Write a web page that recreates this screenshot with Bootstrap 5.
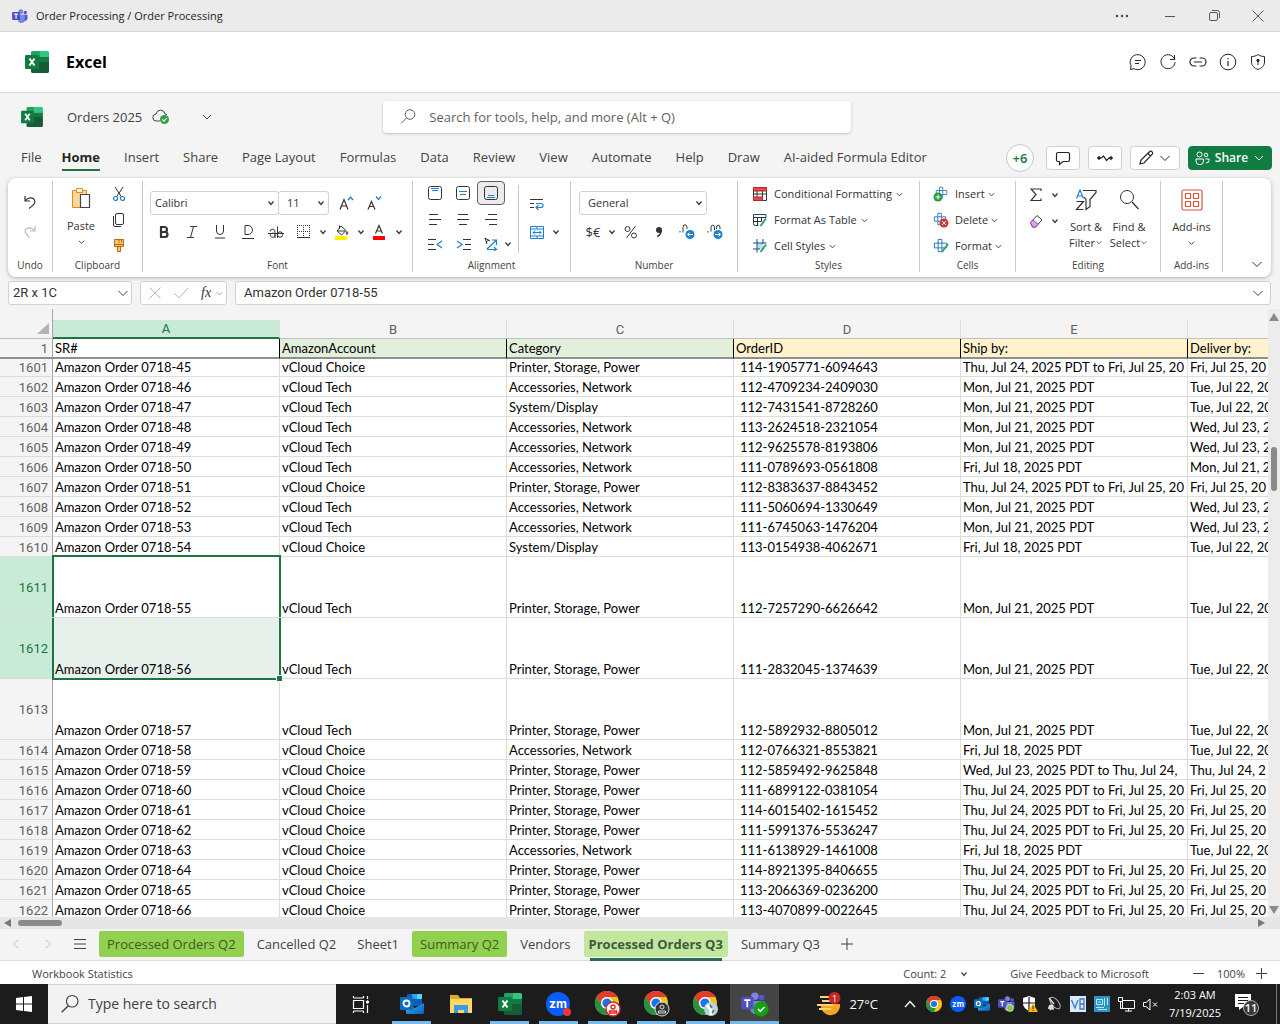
<!DOCTYPE html>
<html lang="en">
<head>
<meta charset="utf-8">
<meta name="viewport" content="width=device-width, initial-scale=1">
<title>Orders 2025 - Excel</title>
<link href="https://cdn.jsdelivr.net/npm/bootstrap@5.3.0/dist/css/bootstrap.min.css" rel="stylesheet">
<style>
body{font-family:"Open Sans","Noto Sans",sans-serif;font-size:13px;line-height:18px;color:#424242;background:#f4f4f4;overflow:hidden}
svg{display:block;flex:none;fill:none;stroke:currentColor;stroke-width:1}
a{color:inherit;text-decoration:none}
button{color:inherit}
.plain{background:none;border:0;padding:0;display:inline-flex;align-items:center;justify-content:center;font:inherit;color:inherit;flex:none}
.titlebar{height:32px;background:#ebebeb;border-bottom:1px solid #d6d6d6;font-size:11px;padding-left:12px;color:#242424}
.titlebar .plain{width:44px;height:31px;color:#555}
.apphead{height:61px;background:#fff;border-bottom:1px solid #d9d9d9;padding:0 13px 0 24px}
.apphead h1{font-size:16px;font-weight:700;line-height:20px;margin:0 0 0 16px;color:#000}
.apphead .plain{width:18px;height:24px;color:#242424}
.docrow{height:48px;padding-left:21px}
.tellme{width:468px;height:32px;margin-left:169px;background:#fff;border-radius:4px;box-shadow:0 1px 3px #0003;padding:0 16px;color:#616161}
.tellme input{border:0;background:none;outline:0;font-size:13px;width:100%;color:#616161;padding:0}
.tellme input::placeholder,.winsearch input::placeholder{color:inherit;opacity:1}
.tabrow{height:37px;padding:0 8px 0 21px}
.tabrow nav{gap:24px;height:33px}
.tabrow nav a{white-space:nowrap;padding-bottom:2px;border-bottom:2px solid transparent;line-height:20px;padding-top:2px}
.tabrow nav a:first-child{margin-right:-4px}
.tabrow nav a.now{font-weight:700;color:#242424;border-color:#217346}
.more6{width:28px;height:28px;border:1px solid #c8c8c8;border-radius:50%;background:#fff;color:#1b7444;font-weight:600;margin-right:4px}
.tbtn{height:24px;background:#fff;border:1px solid #d1d1d1;border-radius:4px;color:#242424;width:34px}
.tbtn.wide{width:50px;gap:4px}
.tbtn.share{width:84px;background:#107c41;border-color:#107c41;color:#fff;font-size:12px;font-weight:600;gap:5px}
.ribbon{height:99px;margin:0 9px 4px 8px;background:#fff;border-radius:8px;box-shadow:0 1px 4px #0004;color:#333}
.grp{border-right:1px solid #c8c8c8;margin:3px 0 5px;flex:none}
.grp .body{height:77px}
.grp .lbl{font-size:10px;line-height:14px;text-align:center;color:#424242}
.g-undo{width:45px}.g-clip{width:90px}.g-font{width:270px}.g-align{width:158px}.g-num{width:167px}.g-sty{width:182px}.g-cell{width:96px}.g-edit{width:145px}.g-add{width:62px}
.ib{width:28px;height:24px}
.cv{width:10px;height:24px}
.ib.on{background:#ebebeb;border:1px solid #616161;border-radius:4px}
.ln{height:26px}
.ln .plain{font-size:11px;gap:7px}
.ln .plain svg+svg,.ln .plain svg:last-child:not(:first-child){margin-left:-4px}
.duo{font-size:11px;line-height:16px}
.combo{height:24px;border:1px solid #d1d1d1;border-radius:3px;font-size:11px;padding:0 0 0 4px;color:#333;appearance:none;background:#fff url("data:image/svg+xml,%3Csvg xmlns='http://www.w3.org/2000/svg' viewBox='0 0 8 8'%3E%3Cpath d='M1.5 2.5 4 5.5 6.500 2.500' fill='none' stroke='%23333' stroke-width='1.200'/%3E%3C/svg%3E") no-repeat right 3px center/8px 8px}
.vr1{width:1px;background:#c8c8c8;height:68px}
.fbar{height:24px;margin:0 9px 4px 8px;gap:8px}
.fbox{background:#fff;border:1px solid #d1d1d1;border-radius:3px;height:24px;padding:0 4px}
.fbox input{border:0;outline:0;background:none;font-family:Roboto,sans-serif;font-size:13px;color:#333;min-width:0;padding:0;flex:1}
.sheet{font-family:Lato,sans-serif;font-size:13px;color:#000;min-height:0}
.gridwrap{overflow:hidden;min-width:0}
.xl{table-layout:fixed;width:1414px;border-collapse:separate;border-spacing:0}
.xl th,.xl td{padding:0;border:0 solid #dcdcdc;vertical-align:bottom;font-weight:400}
.xl td{background:#fff;border-width:0 1px 1px 0;position:relative}
.xl td div{overflow:hidden;white-space:nowrap;line-height:18px;padding:1px 0 0 2px}
.xl td:nth-child(5) div{padding-left:6px}
.xl .first td div{line-height:17px;padding-top:0}
.xl th{font-family:Roboto,sans-serif;color:#616161;background:#f4f4f4}
.xl tbody th{text-align:right;padding:1px 4px 0 0;border-width:0 1px 1px 0;border-right-color:#a6a6a6;vertical-align:middle;line-height:17px}
.xl .first th{padding-top:0}
.xl .gap0 th{height:11px}
.xl .gap0 th:first-child,.xl .cols th:first-child{border-right:1px solid #a6a6a6}
.xl .cols th{height:19px;text-align:center;line-height:17px;border-width:0 1px 1px 0;border-bottom-color:#c0c0c0;vertical-align:middle}
.xl .cols th.hit{background:#c8ead7;color:#1b7444;border-bottom:2px solid #217346;line-height:16px}
.xl .hd th,.xl .hd td{border-bottom:2px solid #8f8f8f;height:20px}
.xl .hd td{border-right-color:#000}
.xl .hd td div{line-height:17px}
.xl .hd .gr{background:#e2efda}.xl .hd .ye{background:#fff2cc}
.xl tr.hitrow th{background:#c8ead7;color:#1b7444}
.xl tr.hitrow td:nth-child(2)::after{content:"";position:absolute;inset:-2px -2px 0 -1px;border:2px solid #1b7444;border-bottom:0;pointer-events:none;z-index:1}
.xl tr.hitrow+tr.hitrow td:nth-child(2)::after{inset:0 -2px -2px -1px;border-width:0 2px 2px;border-bottom:2px solid #1b7444}
.xl tr.hitrow+tr.hitrow td:nth-child(2){background:#e7f0eb}
.xl .knob{position:absolute;right:-3px;bottom:-3px;width:5px;height:5px;background:#1b7444;outline:1px solid #fff;z-index:2}
.vscroll{width:12px;background:#ececec;flex:none}
.vthumb{width:6px;height:44px;border-radius:3px;background:#8a8a8a;margin-top:126px}
.hscroll{height:12px;background:#e6e6e6}
.hthumb{width:44px;height:6px;border-radius:3px;background:#8a8a8a;margin-left:7px}
.tabsbar{height:32px;border-bottom:1px solid #dcdcdc;padding:0 0 2px 8px}
.stab{height:26px;padding:0 8px;border-radius:2px;display:inline-flex;align-items:center;white-space:nowrap;margin-right:5px}
.stab.dk{background:#92d050;color:#3f5a22}
.stab.cur{background:#c3e69f;font-weight:700;padding:0 5px;position:relative;color:#3c5a3c}
.stab.cur::after{content:"";position:absolute;left:6px;right:6px;bottom:-4px;height:3px;background:#2a6b4f}
.status{height:23px;background:#fff;font-size:11px;padding:2px 13px 0 32px;line-height:16px}
.taskbar{height:40px;background:#1c1c1c;color:#fff;font-size:13px}
.winsearch{width:288px;height:40px;background:#f2f2f2;color:#404040;padding-left:12px;border:1px solid #d0d0d0;border-width:1px 0}
.winsearch input{border:0;background:none;outline:0;font-size:14px;color:#404040;padding:0;width:220px}
.tk{width:49px;height:40px;border-bottom:3px solid transparent!important;background-clip:padding-box!important;padding-top:3px!important}
.tk.run::after{content:"";position:absolute;left:5px;right:5px;bottom:-3px;height:3px;background:#76b9ed}
.tk.act{background:#444!important;background-clip:border-box!important}
.tk.act::after{left:0;right:0}
.tr24{width:24px;height:40px}
.clock{font-size:11px;line-height:18px;width:66px;text-align:center}
</style>
</head>
<body class="vh-100 d-flex flex-column">

<svg width="0" height="0" class="position-absolute" aria-hidden="true">
 <defs>
  <linearGradient id="blu" x2="1" y2="1"><stop stop-color="#35b8f1"/><stop offset="1" stop-color="#0a5cbd"/></linearGradient>
  <symbol id="dn" viewBox="0 0 10 10"><path d="M2 3.500 5 6.500 8 3.500"/></symbol>
  <symbol id="xl" viewBox="0 0 24 22"><g stroke="none"><path fill="#21a366" d="M7 0h8v6H6V1z"/><path fill="#33c481" d="M15 0h8l1 1v5h-9z"/><path fill="#107c41" d="M6 6h9v6H6zM15 6h9v5h-9z"/><path fill="#185c37" d="M6 11h18v10l-1 1H7l-1-1z"/><rect y="4" width="14" height="14" rx="1" fill="#107c41"/></g><path stroke="#fff" stroke-width="2" d="M4.500 7.500l5 7M9.500 7.500l-5 7"/></symbol>
  <symbol id="teams" viewBox="0 0 18 16"><g stroke="none"><circle cx="15" cy="4" r="2" fill="#5059c9"/><circle cx="10" cy="3" r="2.700" fill="#7b83eb"/><path fill="#5059c9" d="M12 6.500h5.500V11a3 3 0 0 1-5 2z"/><path fill="#7b83eb" d="M6 6.500h8.500v5a4 4 0 0 1-8 1z"/><rect y="3.500" width="9" height="9" rx="1" fill="#4b53bc"/></g><path stroke="#fff" stroke-width="1.300" d="M2.300 5.900h4.500M4.500 6v5"/></symbol>
  <symbol id="chrome" viewBox="0 0 24 24"><g stroke="none"><circle cx="12" cy="12" r="12" fill="#fbc116"/><path fill="#e33b2e" d="M1.600 6A12 12 0 0 1 22.400 6H12a6 6 0 0 0-5.200 9z"/><path fill="#229342" d="M1.600 6l5.200 9a6 6 0 0 0 8 2.200L12 24A12 12 0 0 1 1.600 6z"/><circle cx="12" cy="12" r="6" fill="#fff"/><circle cx="12" cy="12" r="4.600" fill="#1a73e8"/></g></symbol>
  <symbol id="olk" viewBox="0 0 24 22"><g stroke="none"><path fill="#0a5cbd" d="M7 1h15v12H7z"/><path fill="#28a8ea" d="M12 1h10v5H12z"/><path fill="#50d9ff" d="M17 1h5v5h-5z"/><path fill="url(#blu)" d="M6 10l9 5 9-5v10l-1 1H7l-1-1z"/><rect y="4" width="13" height="13" rx="1" fill="#0f6cbd"/></g><circle cx="6.500" cy="10.500" r="3" stroke="#fff" stroke-width="1.800"/></symbol>
  <symbol id="zoomi" viewBox="0 0 24 24"><circle cx="12" cy="12" r="12" fill="#0b5cff" stroke="none"/><text x="12" y="16" text-anchor="middle" font-family="Inter,sans-serif" font-weight="700" font-size="12" fill="#fff" stroke="none">zm</text></symbol>
  <symbol id="cross" viewBox="0 0 16 16"><path fill="#fff" stroke="#1e6fb8" d="M5.500 1.500h4v4h5v5h-5v4h-4v-4h-4v-5h4z"/><path stroke="#1e6fb8" d="M5.500 5.500h4v5h-4z"/></symbol>
 </defs>
</svg>

<header class="titlebar d-flex align-items-center flex-shrink-0">
 <svg width="16" height="14" class="me-2"><use href="#teams"/></svg>
 <span class="me-auto">Order Processing / Order Processing</span>
 <button class="plain" aria-label="More"><svg width="14" height="4"><g fill="#444" stroke="none"><circle cx="2" cy="2" r="1.200"/><circle cx="7" cy="2" r="1.200"/><circle cx="12" cy="2" r="1.200"/></g></svg></button>
 <button class="plain ms-1" aria-label="Minimize"><svg width="10" height="10"><path d="M0 5.500h10"/></svg></button>
 <button class="plain" aria-label="Restore"><svg width="11" height="11"><rect x=".5" y="2.500" width="8" height="8" rx="1.500"/><path d="M3 .5h5.500a2 2 0 0 1 2 2V8"/></svg></button>
 <button class="plain" aria-label="Close"><svg width="12" height="12"><path d="M.5.5l11 11M11.500.5l-11 11"/></svg></button>
</header>

<section class="apphead d-flex align-items-center flex-shrink-0">
 <svg width="26" height="22"><use href="#xl"/></svg>
 <h1 class="me-auto">Excel</h1>
 <div class="d-flex" style="gap:12px">
  <button class="plain" aria-label="Chat"><svg width="18" height="18" viewBox="0 0 18 18"><path d="M1.500 16.500l.6-3.700A7.500 7.500 0 1 1 5 15.700zM6 7.500h6M6 10.500h4"/></svg></button>
  <button class="plain" aria-label="Refresh"><svg width="18" height="18" viewBox="0 0 18 18"><path d="M15.800 7a7 7 0 1 0 .2 2M15.500 2v4.500H11"/></svg></button>
  <button class="plain" aria-label="Copy link"><svg width="18" height="18" viewBox="0 0 18 18"><path d="M7.500 13H5a4 4 0 0 1 0-8h2.500M10.500 5H13a4 4 0 0 1 0 8h-2.500M5 9h8" stroke-width="1.200"/></svg></button>
  <button class="plain" aria-label="About"><svg width="18" height="18" viewBox="0 0 18 18"><circle cx="9" cy="9" r="7.800"/><path d="M9 8v5M9 5v1.200" stroke-width="1.200"/></svg></button>
  <button class="plain" aria-label="Privacy"><svg width="18" height="18" viewBox="0 0 18 18"><path d="M9 1.500c2 1.500 4 2 6.500 2V9c0 3.500-2.500 6-6.500 7.500C5 15 2.500 12.500 2.500 9V3.500C5 3.500 7 3 9 1.500zM9 8v4"/><circle cx="9" cy="7.500" r="1.200" fill="currentColor"/></svg></button>
 </div>
</section>

<section class="docrow d-flex align-items-center flex-shrink-0">
 <svg width="22" height="20"><use href="#xl"/></svg>
 <span style="margin-left:24px">Orders 2025</span>
 <svg width="18" height="16" viewBox="0 0 18 16" style="margin-left:10px"><path d="M8 12H4.500a3.500 3.500 0 0 1-.4-7A4.500 4.500 0 0 1 13 5a3 3 0 0 1 2 1"/><circle cx="12.500" cy="10.500" r="4.500" fill="#2ea043" stroke="none"/><path stroke="#fff" stroke-width="1.200" d="M10.300 10.500l1.700 1.700 2.700-3"/></svg>
 <button class="plain" style="margin-left:30px" aria-label="File menu"><svg width="14" height="14" stroke-width=".7"><path d="M3 5l4 4 4-4"/></svg></button>
 <label class="tellme d-flex align-items-center gap-2">
  <svg width="18" height="18" viewBox="0 0 18 18" class="me-1"><circle cx="11" cy="6.500" r="4.800"/><path d="M7.500 10L2 15.500"/></svg>
  <input type="search" placeholder="Search for tools, help, and more (Alt + Q)" aria-label="Search">
 </label>
</section>

<section class="tabrow d-flex align-items-start flex-shrink-0">
 <nav class="d-flex align-items-center me-auto">
  <a href="#">File</a><a href="#" class="now">Home</a><a href="#">Insert</a><a href="#">Share</a><a href="#">Page Layout</a><a href="#">Formulas</a><a href="#">Data</a><a href="#">Review</a><a href="#">View</a><a href="#">Automate</a><a href="#">Help</a><a href="#">Draw</a><a href="#">AI-aided Formula Editor</a>
 </nav>
 <div class="d-flex align-items-center gap-2" style="height:33px">
  <button class="plain more6">+6</button>
  <button class="plain tbtn" aria-label="Comments"><svg width="16" height="16" viewBox="0 0 16 16"><path stroke-width="1.200" d="M3 2.500h10a1.500 1.500 0 0 1 1.500 1.500v6a1.500 1.500 0 0 1-1.500 1.500H8L4.500 14.500v-3H3A1.500 1.500 0 0 1 1.500 10V4A1.500 1.500 0 0 1 3 2.500z"/></svg></button>
  <button class="plain tbtn" aria-label="Catch up"><svg width="16" height="10" viewBox="0 0 16 10"><path stroke-width="1.200" d="M2 5h2.500L6.500 3l3 4.500L12 5h2"/><circle cx="2" cy="5" r="1.300" fill="currentColor"/><circle cx="14" cy="5" r="1.300" fill="currentColor"/></svg></button>
  <button class="plain tbtn wide" aria-label="Editing mode"><svg width="16" height="16" viewBox="0 0 16 16"><path stroke-width="1.200" d="M2 14l1-4L11.500 1.800a1.800 1.800 0 0 1 2.600 2.600L6 13zM10 3.500l2.500 2.500"/></svg><svg width="14" height="14"><path d="M2.500 5L7 9.500 11.500 5"/></svg></button>
  <button class="plain tbtn share"><svg width="15" height="14" viewBox="0 0 15 14"><circle cx="4.500" cy="3.500" r="2.500"/><circle cx="11" cy="4" r="1.800"/><path d="M1 8h7.500v2a3.700 3.700 0 0 1-7.500 0zM10.500 8H14v1.500a2.500 2.500 0 0 1-3 2.300"/></svg>Share<svg width="12" height="12"><path d="M2 4l4 4 4-4"/></svg></button>
 </div>
</section>

<section class="ribbon d-flex flex-shrink-0">
 <div class="grp g-undo"><div class="body d-flex flex-column align-items-center" style="padding-top:9px;gap:6px">
  <button class="plain ib" aria-label="Undo"><svg width="14" height="14" viewBox="0 0 14 14"><path stroke-width="1.200" d="M2 1v5h5M2 6c3-4 8-4 9.500-1s-1 5-5.500 8.500"/></svg></button>
  <button class="plain ib" aria-label="Redo" style="color:#bbb"><svg width="14" height="14" viewBox="0 0 14 14"><path stroke-width="1.200" d="M12 1v5H7M12 6C9 2 4 2 2.500 5s1 4 4 7.500"/></svg></button>
 </div><div class="lbl">Undo</div></div>

 <div class="grp g-clip"><div class="body d-flex">
  <button class="plain flex-column duo" style="width:56px"><svg width="22" height="24" viewBox="0 0 22 24"><path fill="#fbd79b" stroke="#e08a1c" d="M2.500 4.500h14v17h-14z"/><path fill="#f4f4f4" stroke="#e08a1c" d="M6.500 2.500h6v4h-6z"/><path fill="#fff" stroke="#444" stroke-width="1.200" d="M10.500 8.500h9v13h-9z"/></svg><span class="mt-2">Paste</span><svg width="9" height="16" class="mb-1"><use href="#dn"/></svg></button>
  <div style="width:20px">
   <button class="plain ln w-100" aria-label="Cut"><svg width="14" height="16" viewBox="0 0 14 16"><path d="M3 1l6.500 10M11 1L4.500 11"/><g stroke="#1e7fd0" stroke-width="1.200"><circle cx="3.500" cy="12.500" r="2"/><circle cx="10.500" cy="12.500" r="2"/></g></svg></button>
   <button class="plain ln w-100" aria-label="Copy"><svg width="14" height="16" viewBox="0 0 14 16"><rect x="3.500" y="1.500" width="8" height="11" rx="1.500"/><path d="M1.500 4v9a1.500 1.500 0 0 0 1.500 1.500H9"/></svg></button>
   <button class="plain ln w-100" aria-label="Format painter"><svg width="14" height="16" viewBox="0 0 14 16"><path fill="#fbc56d" stroke="#b8690c" d="M2.500 1.500h9v7h-9zM5.500 8.500h3v5h-3zM7 1.500v3M9.500 1.500v3M2.500 6.500h9"/></svg></button>
  </div>
 </div><div class="lbl">Clipboard</div></div>

 <div class="grp g-font"><div class="body" style="padding:10px 0 0 7px">
  <div class="d-flex"><select class="combo" style="width:129px" aria-label="Font"><option>Calibri</option></select><select class="combo" style="width:51px;margin-left:-1px;padding-left:8px" aria-label="Font size"><option>11</option></select>
   <button class="plain ib ms-1" aria-label="Grow font"><svg width="16" height="16" viewBox="0 0 16 16"><path stroke-width="1.200" d="M1 14.500l4-10 4 10M2.500 11h5"/><path stroke="#1e7fd0" stroke-width="1.200" d="M9 5l2.500-3L14 5"/></svg></button>
   <button class="plain ib" aria-label="Shrink font"><svg width="16" height="16" viewBox="0 0 16 16"><path stroke-width="1.200" d="M1 14.500l3.500-8 3.500 8M2.500 11.500h4"/><path stroke="#1e7fd0" stroke-width="1.200" d="M9 1.500l2.500 3 2.500-3"/></svg></button></div>
  <div class="d-flex" style="margin-top:5px">
   <button class="plain ib" aria-label="Bold"><svg width="12" height="14" viewBox="0 0 12 14"><path stroke-width="2.200" d="M3 2h3.500a2.500 2.500 0 0 1 0 5H3zM3 7h4a2.500 2.500 0 0 1 0 5H3z"/></svg></button>
   <button class="plain ib" aria-label="Italic"><svg width="14" height="14" viewBox="0 0 14 14"><path d="M5 1.500h7M2 12.500h7M8.500 1.500l-3 11"/></svg></button>
   <button class="plain ib" aria-label="Underline"><svg width="12" height="14" viewBox="0 0 12 14"><path d="M2.500 0v6a3.500 3.500 0 0 0 7 0V0M1 13h10"/></svg></button>
   <button class="plain ib" aria-label="Double underline"><svg width="12" height="16" viewBox="0 0 12 16"><path d="M3 1.500h3a4 4 0 0 1 0 9H3zM0 14.500h12"/></svg></button>
   <button class="plain ib" aria-label="Strikethrough"><svg width="16" height="14" viewBox="0 0 16 14"><path d="M0 8.500h16M7 13V7a2.500 2.500 0 0 0-5-.5M7 9.500a2.500 2 0 1 1-1-1M9.500 1.500V13"/><circle cx="12" cy="9.500" r="2.700"/></svg></button>
   <button class="plain ib" aria-label="Borders"><svg width="14" height="14" viewBox="0 0 14 14"><path stroke-dasharray="1 1" d="M0 .5h13M0 6.500h13M.5 0v12M6.500 0v12M12.500 0v12"/><path d="M0 12.500h13"/></svg></button>
   <button class="plain cv" aria-label="Border options"><svg width="8" height="8" viewBox="0 0 8 8"><path stroke-width="1.200" d="M1.500 2.500L4 5.500l2.500-3"/></svg></button>
   <button class="plain ib" aria-label="Fill colour"><svg width="14" height="16" viewBox="0 0 14 16"><path d="M6 2l5 4.500L6.500 11 2 7zM4.500 5V1.500M2.500 7h8M12 7.500c1.500 2 .5 3 0 3s-1.500-1 0-3z"/><path fill="#fff100" stroke="none" d="M0 12h12v4H0z"/></svg></button>
   <button class="plain cv" aria-label="Fill options"><svg width="8" height="8" viewBox="0 0 8 8"><path stroke-width="1.200" d="M1.500 2.500L4 5.500l2.500-3"/></svg></button>
   <button class="plain ib" aria-label="Font colour"><svg width="14" height="16" viewBox="0 0 14 16"><path stroke-width="1.200" d="M2.500 9.500l3.500-8 3.500 8M3.800 7h4.400"/><path fill="#f00" stroke="none" d="M0 12h12v4H0z"/></svg></button>
   <button class="plain cv" aria-label="Font colour options"><svg width="8" height="8" viewBox="0 0 8 8"><path stroke-width="1.200" d="M1.500 2.500L4 5.500l2.500-3"/></svg></button>
  </div></div><div class="lbl">Font</div></div>

 <div class="grp g-align"><div class="body d-flex">
  <div class="d-flex flex-column" style="width:105px;padding-left:8px">
   <div class="d-flex ln align-items-start">
    <button class="plain ib" aria-label="Top align"><svg width="14" height="14" viewBox="0 0 14 14"><rect x=".5" y=".5" width="13" height="13" rx="2"/><path stroke="#1e7fd0" d="M3 2.500h8M4 4.500h6"/></svg></button>
    <button class="plain ib" aria-label="Middle align"><svg width="14" height="14" viewBox="0 0 14 14"><rect x=".5" y=".5" width="13" height="13" rx="2"/><path stroke="#1e7fd0" d="M3 5.500h8M4 8.500h6"/></svg></button>
    <button class="plain ib on" aria-label="Bottom align"><svg width="14" height="14" viewBox="0 0 14 14"><rect x=".5" y=".5" width="13" height="13" rx="2"/><path stroke="#1e7fd0" d="M4 9.500h6M3 11.500h8"/></svg></button></div>
   <div class="d-flex ln">
    <button class="plain ib" aria-label="Align left"><svg width="12" height="12"><path d="M0 1.500h9M0 6.500h12M0 11.500h8"/></svg></button>
    <button class="plain ib" aria-label="Centre"><svg width="12" height="12"><path d="M1 1.500h10M0 6.500h12M2 11.500h8"/></svg></button>
    <button class="plain ib" aria-label="Align right"><svg width="12" height="12"><path d="M3 1.500h9M0 6.500h12M4 11.500h8"/></svg></button></div>
   <div class="d-flex ln">
    <button class="plain ib" aria-label="Decrease indent"><svg width="15" height="12"><path d="M0 1.500h8M0 6.500h6M0 11.500h8"/><path stroke="#1e7fd0" stroke-width="1.200" d="M14 3l-5 3.500 5 3.500"/></svg></button>
    <button class="plain ib" aria-label="Increase indent"><svg width="15" height="12"><path d="M7 1.500h8M9 6.500h6M7 11.500h8"/><path stroke="#1e7fd0" stroke-width="1.200" d="M1 3l5 3.500L1 10"/></svg></button>
    <button class="plain ib" aria-label="Orientation"><svg width="14" height="14" viewBox="0 0 14 14"><path d="M1 1l2 6M1 1l5 3M2 5l3-2"/><path stroke="#1e7fd0" stroke-width="1.200" d="M3 12L12 3.500M8 3h4.500v5M3 12.500h9M10 10l2.500 2.500-2.500 1"/></svg></button>
    <button class="plain cv" style="margin-left:-2px" aria-label="Orientation options"><svg width="8" height="8" viewBox="0 0 8 8"><path stroke-width="1.200" d="M1.500 2.500L4 5.500l2.500-3"/></svg></button></div>
  </div>
  <div class="vr1 mt-1"></div>
  <div style="padding:10px 0 0 4px">
   <button class="plain ib d-flex" aria-label="Wrap text"><svg width="14" height="13" viewBox="0 0 14 13"><path d="M0 2.500h13M0 6.500h4M0 10.500h4"/><path stroke="#1e7fd0" stroke-width="1.200" d="M6 6.500h5a2 2 0 0 1 0 4H6.500M8.500 8L6 10.500 8.500 13"/></svg></button>
   <div class="d-flex" style="margin-top:5px"><button class="plain ib" aria-label="Merge"><svg width="14" height="13" viewBox="0 0 14 13"><path stroke="#1e7fd0" d="M.5.5h13v12H.5zM.5 3h13M.5 10h13M7 .5V3M7 10v2.500M3 6.500h8M5 4.500L3 6.500l2 2M9 4.500l2 2-2 2"/></svg></button><button class="plain cv" aria-label="Merge options"><svg width="8" height="8" viewBox="0 0 8 8"><path stroke-width="1.200" d="M1.500 2.500L4 5.500l2.500-3"/></svg></button></div>
  </div>
 </div><div class="lbl">Alignment</div></div>

 <div class="grp g-num"><div class="body" style="padding:10px 0 0 8px">
  <select class="combo" style="width:128px;padding-left:8px" aria-label="Number format"><option>General</option></select>
  <div class="d-flex" style="margin-top:5px">
   <button class="plain ib" style="font-size:13px" aria-label="Currency">$€</button>
   <button class="plain cv" aria-label="Currency options"><svg width="8" height="8" viewBox="0 0 8 8"><path stroke-width="1.200" d="M1.500 2.500L4 5.500l2.500-3"/></svg></button>
   <button class="plain ib" aria-label="Percent"><svg width="14" height="14" viewBox="0 0 14 14"><circle cx="3.500" cy="4" r="2.500"/><circle cx="10" cy="10.500" r="2.500"/><path d="M11.500 1L2.500 13"/></svg></button>
   <button class="plain ib" aria-label="Comma"><svg width="8" height="12" viewBox="0 0 8 12"><circle cx="4" cy="4" r="3" fill="currentColor" stroke="none"/><path stroke-width="1.500" d="M6.300 4c0 3-1 5-4 6.500"/></svg></button>
   <button class="plain ib" aria-label="Increase decimal"><svg width="16" height="16" viewBox="0 0 16 16"><path d="M1 7v1.500M4 8.500V3.500a1.500 2 0 0 1 4 0V5"/><circle cx="11" cy="10.500" r="4.500" fill="#1e7fd0" stroke="none"/><path stroke="#fff" d="M14 10.500H8.500M10.500 8.500l-2 2 2 2"/></svg></button>
   <button class="plain ib" aria-label="Decrease decimal"><svg width="16" height="16" viewBox="0 0 16 16"><path d="M1 7v1.500M4 7.500V3.500a1.500 2 0 0 1 3.500 0V6M9.500 5V3.500a1.500 2 0 0 1 3.500 0V5"/><circle cx="11" cy="10.500" r="4.500" fill="#1e7fd0" stroke="none"/><path stroke="#fff" d="M8 10.500h5.500M11.500 8.500l2 2-2 2"/></svg></button>
  </div></div><div class="lbl">Number</div></div>

 <div class="grp g-sty"><div class="body" style="padding-left:15px">
  <div class="ln d-flex"><button class="plain"><svg width="14" height="14" viewBox="0 0 14 14"><path d="M.5 .5h13v13H.5zM4 4v6M.5 7h13M9.500 4v9.500"/><path fill="#e8474f" stroke="#b02a33" d="M.5.500h13v3.500H.5zM.5 10h9v3.500h-9z"/></svg>Conditional Formatting <svg width="9" height="9" stroke-width="1.400"><use href="#dn"/></svg></button></div>
  <div class="ln d-flex"><button class="plain"><svg width="14" height="14" viewBox="0 0 14 14"><path stroke="#1a4f80" fill="#fff" d="M.5 1.500h12.500v3H.5z"/><path d="M.5 4.500h12.500M.5 4.500v6a2 2 0 0 0 2 2h3M4.500 4.500v8M8.500 4.500v4M.5 8.500h8"/><path stroke="#2fa86a" stroke-width="2" d="M13 5.500L7.500 13"/></svg>Format As Table <svg width="9" height="9"><use href="#dn"/></svg></button></div>
  <div class="ln d-flex"><button class="plain"><svg width="14" height="14" viewBox="0 0 14 14"><path fill="#b9defa" stroke="none" d="M4 4h6v6H4z"/><path stroke="#1a4f80" d="M0 4h13.500M0 10h7M4 0v13.500M10 0v5"/><path stroke="#2fa86a" stroke-width="2" d="M13 5.500L7.500 13"/></svg>Cell Styles <svg width="9" height="9"><use href="#dn"/></svg></button></div>
 </div><div class="lbl">Styles</div></div>

 <div class="grp g-cell"><div class="body" style="padding-left:13px">
  <div class="ln d-flex"><button class="plain" style="gap:6px"><svg width="16" height="16" viewBox="0 0 16 16"><use href="#cross" width="15" height="13" x="1"/><circle cx="5" cy="11" r="4.500" fill="#2c9a45" stroke="none"/><path stroke="#fff" d="M5 8.500v5M2.500 11h5"/></svg>Insert <svg width="9" height="9"><use href="#dn"/></svg></button></div>
  <div class="ln d-flex"><button class="plain" style="gap:6px"><svg width="16" height="16" viewBox="0 0 16 16"><use href="#cross" width="14" height="14"/><circle cx="11" cy="11" r="4.500" fill="#d13438" stroke="none"/><path stroke="#fff" d="M9 9l4 4M13 9l-4 4"/></svg>Delete <svg width="9" height="9"><use href="#dn"/></svg></button></div>
  <div class="ln d-flex"><button class="plain" style="gap:6px"><svg width="16" height="16" viewBox="0 0 16 16"><use href="#cross" width="15" height="15"/><path stroke="#2fa86a" stroke-width="2" d="M15 6L9 14"/></svg>Format <svg width="9" height="9"><use href="#dn"/></svg></button></div>
 </div><div class="lbl">Cells</div></div>

 <div class="grp g-edit"><div class="body d-flex">
  <div style="width:46px;padding-left:6px"><div class="d-flex" style="margin-top:2px"><button class="plain ib" aria-label="AutoSum"><svg width="12" height="14" viewBox="0 0 12 14"><path stroke-width="1.200" d="M11 3V1H1l5 5.500L1 12.500h10v-2"/></svg></button><button class="plain cv" aria-label="AutoSum options"><svg width="8" height="8" viewBox="0 0 8 8"><path stroke-width="1.200" d="M1.500 2.500L4 5.500l2.500-3"/></svg></button></div>
   <div class="d-flex" style="margin-top:2px"><button class="plain ib" aria-label="Clear"><svg width="14" height="14" viewBox="0 0 14 14"><path d="M1.500 8.500L8 1.500l5 4.500-6.500 7-3 0z"/><path fill="#d9a6e6" stroke="#9b3fb5" d="M1.500 8.500L4 5.800l5 4.500-2.500 2.700h-3z"/></svg></button><button class="plain cv" aria-label="Clear options"><svg width="8" height="8" viewBox="0 0 8 8"><path stroke-width="1.200" d="M1.500 2.500L4 5.500l2.500-3"/></svg></button></div></div>
  <button class="plain flex-column duo" style="width:48px"><svg width="22" height="22" viewBox="0 0 22 22" class="mb-2"><path stroke="#1e7fd0" stroke-width="1.200" d="M1.500 9.500L5 1l3.500 8.500M3 7h4.500"/><path stroke-width="1.200" d="M1.500 12.500h7l-7 8h7M8 1.500h13v2l-6 7v7l-4 3v-10L9 8"/></svg>Sort &amp;<span class="d-flex align-items-center">Filter<svg width="8" height="9"><use href="#dn"/></svg></span></button>
  <button class="plain flex-column duo" style="width:38px"><svg width="20" height="22" viewBox="0 0 20 22" class="mb-2"><circle cx="8" cy="8" r="6.500"/><path stroke-width="1.300" d="M13 13l6.500 7"/></svg>Find &amp;<span class="d-flex align-items-center">Select<svg width="8" height="9"><use href="#dn"/></svg></span></button>
 </div><div class="lbl">Editing</div></div>

 <div class="grp g-add"><div class="body d-flex">
  <button class="plain flex-column duo w-100"><svg width="22" height="22" viewBox="0 0 22 22" class="mb-2"><g stroke="#d8593b" stroke-width="1.200"><rect x="1" y="1" width="20" height="20" rx="2"/><path d="M4.500 4.500h5v5h-5zM12.500 4.500h5v5h-5zM4.500 12.500h5v5h-5zM12.500 12.500h5v5h-5z"/></g></svg>Add-ins<svg width="9" height="16"><use href="#dn"/></svg></button>
 </div><div class="lbl">Add-ins</div></div>
 <button class="plain ms-auto align-self-end" style="margin-right:7px;height:26px" aria-label="Collapse ribbon"><svg width="14" height="14"><path d="M2.500 5L7 9.500 11.500 5"/></svg></button>
</section>

<section class="fbar d-flex flex-shrink-0">
 <div class="fbox d-flex align-items-center" style="width:124px"><input value="2R x 1C" aria-label="Name box"><svg width="14" height="14" style="margin-right:-3px"><path d="M2.500 5L7 9.500 11.500 5"/></svg></div>
 <div class="fbox d-flex align-items-center" style="width:87px;gap:12px;padding-left:8px;color:#b8b8b8">
  <button class="plain" aria-label="Cancel"><svg width="12" height="12"><path d="M.5.5l11 11M11.500.5l-11 11"/></svg></button>
  <button class="plain" aria-label="Enter"><svg width="16" height="12"><path d="M1 6l5 5L15 1"/></svg></button>
  <button class="plain" aria-label="Insert function" style="color:#333"><i style="font-family:'Liberation Serif',serif;font-size:14px">fx</i><svg width="9" height="9" class="ms-1" style="color:#999"><use href="#dn"/></svg></button></div>
 <div class="fbox d-flex align-items-center flex-grow-1 ps-2 pe-1"><input value="Amazon Order 0718-55" aria-label="Formula bar"><svg width="16" height="16"><path d="M3.500 6L8 10.500 12.500 6"/></svg></div>
</section>

<main class="sheet d-flex flex-grow-1">
 <div class="gridwrap flex-grow-1">
  <table class="xl">
   <colgroup><col style="width:53px"><col style="width:227px"><col style="width:227px"><col style="width:227px"><col style="width:227px"><col style="width:227px"><col></colgroup>
   <thead>
    <tr class="gap0"><th></th><th colspan="6"></th></tr>
    <tr class="cols"><th><svg width="12" height="12" style="margin-left:37px"><path d="M12 0v11H0z" fill="#b3b3b3" stroke="none"/></svg></th><th class="hit">A</th><th>B</th><th>C</th><th>D</th><th>E</th><th></th></tr>
   </thead>
   <tbody id="rows">
    <tr class="hd"><th>1</th><td><div>SR#</div></td><td class="gr"><div>AmazonAccount</div></td><td class="gr"><div>Category</div></td><td class="ye"><div style="padding-left:2px">OrderID</div></td><td class="ye"><div>Ship by:</div></td><td class="ye"><div>Deliver by:</div></td></tr>
   </tbody>
  </table>
 </div>
 <div class="vscroll d-flex flex-column align-items-center">
  <svg width="10" height="8" class="mt-1"><path d="M5 0l5 8H0z" fill="#8a8a8a" stroke="none"/></svg>
  <div class="vthumb"></div>
  <svg width="10" height="8" class="mt-auto" style="margin-bottom:3px"><path d="M0 0h10L5 8z" fill="#8a8a8a" stroke="none"/></svg>
 </div>
</main>
<div class="hscroll d-flex align-items-center flex-shrink-0">
 <svg width="7" height="8" style="margin-left:4px"><path d="M7 0v8L0 4z" fill="#777" stroke="none"/></svg><div class="hthumb"></div>
 <svg width="7" height="8" class="ms-auto" style="margin-right:15px"><path d="M0 0v8l7-4z" fill="#777" stroke="none"/></svg>
</div>

<nav class="tabsbar d-flex align-items-center flex-shrink-0">
 <button class="plain" style="width:16px;color:#bbb" aria-label="Previous sheet"><svg width="8" height="10"><path d="M6 1L1.500 5 6 9"/></svg></button>
 <button class="plain ms-3" style="width:16px;color:#bbb" aria-label="Next sheet"><svg width="8" height="10"><path d="M2 1l4.500 4L2 9"/></svg></button>
 <button class="plain" style="margin:0 13px 0 18px" aria-label="All sheets"><svg width="12" height="10"><path d="M0 .5h12M0 5h12M0 9.500h12" stroke-width="1.200"/></svg></button>
 <a class="stab dk" href="#">Processed Orders Q2</a><a class="stab" href="#">Cancelled Q2</a><a class="stab" href="#">Sheet1</a><a class="stab dk" href="#">Summary Q2</a><a class="stab" href="#">Vendors</a><a class="stab cur" href="#">Processed Orders Q3</a><a class="stab" href="#">Summary Q3</a>
 <button class="plain" style="margin-left:8px" aria-label="New sheet"><svg width="12" height="12"><path d="M6 0v12M0 6h12"/></svg></button>
</nav>

<footer class="status d-flex align-items-center flex-shrink-0">
 <span class="me-auto">Workbook Statistics</span>
 <span>Count: 2</span><svg width="8" height="8" viewBox="0 0 8 8" style="margin:0 42px 0 14px"><path stroke-width="1.200" d="M1.500 2.500L4 5.500l2.500-3"/></svg>
 <a href="#">Give Feedback to Microsoft</a>
 <button class="plain" style="margin:0 13px 0 44px" aria-label="Zoom out"><svg width="11" height="11"><path d="M0 5.500h11"/></svg></button>
 <span>100%</span>
 <button class="plain" style="margin-left:11px" aria-label="Zoom in"><svg width="11" height="11"><path d="M0 5.500h11M5.500 0v11"/></svg></button>
</footer>

<div class="taskbar d-flex align-items-center flex-shrink-0">
 <button class="plain" style="width:48px" aria-label="Start"><svg width="16" height="16" viewBox="0 0 16 16"><path fill="#fff" stroke="none" d="M0 2l7-1v6.500H0zM8 1l8-1v7.500H8zM0 8.500h7V15l-7-1zM8 8.500h8V16l-8-1z"/></svg></button>
 <label class="winsearch d-flex align-items-center gap-2"><svg width="20" height="20" viewBox="0 0 18 18"><circle cx="11" cy="6.500" r="5.200"/><path stroke-width="1.200" d="M7.500 10.500L1.500 16.500"/></svg><input type="search" placeholder="Type here to search" aria-label="Windows search"></label>
 <button class="plain tk" style="margin-right:2px" aria-label="Task view"><svg width="18" height="17" viewBox="0 0 18 17"><path d="M1.500 4.500h10v8h-10zM1.500 0v2M11.500 0v2M1.500 2h10M1.500 15h10M1.500 17v-2M11.500 17v-2M15.500 0v3M15.500 9v8" stroke-width="1.200"/><circle cx="15.500" cy="6" r="1.200" fill="#fff"/></svg></button>
 <button class="plain tk run position-relative" aria-label="Outlook"><svg width="24" height="22"><use href="#olk"/></svg></button>
 <button class="plain tk" aria-label="File Explorer"><svg width="22" height="20" viewBox="0 0 22 20"><g stroke="none"><path fill="#e8a91f" d="M0 1h8l2 3h12v15H0z"/><path fill="#ffd86b" d="M0 5h22v14H0z"/><path fill="#3d9be0" d="M4 11h14v8h-4v-3H8v3H4z"/></g></svg></button>
 <button class="plain tk run position-relative" aria-label="Excel"><svg width="24" height="22"><use href="#xl"/></svg></button>
 <button class="plain tk run position-relative" aria-label="Zoom"><svg width="26" height="24" viewBox="0 0 26 24"><use href="#zoomi" width="24" height="24"/><circle cx="21" cy="20" r="4" fill="#f0392b" stroke="none"/></svg></button>
 <button class="plain tk run position-relative" aria-label="Chrome profile 1"><svg width="26" height="26" viewBox="0 0 26 26"><use href="#chrome" width="24" height="24"/><circle cx="18" cy="18" r="7" fill="#fff" stroke="#d22" stroke-width="1.400"/><circle cx="18" cy="16" r="2" stroke="#d22" stroke-width="1.400"/><path stroke="#d22" stroke-width="1.400" d="M14.500 22v-2h7v2z"/></svg></button>
 <button class="plain tk run position-relative" aria-label="Chrome profile 2"><svg width="26" height="26" viewBox="0 0 26 26"><use href="#chrome" width="24" height="24"/><circle cx="18" cy="18" r="7" fill="#333" stroke="#ddd"/><circle cx="18" cy="16" r="2" stroke="#ddd"/><path stroke="#ddd" d="M14.500 22v-2h7v2z"/></svg></button>
 <button class="plain tk run position-relative" aria-label="Chrome profile 3"><svg width="26" height="26" viewBox="0 0 26 26"><use href="#chrome" width="24" height="24"/><circle cx="18" cy="18" r="7" fill="#b9d3dc" stroke="none"/><path stroke="#fff" stroke-width="3" d="M14 14l4 5v5"/><path stroke="#566" stroke-width="1.500" d="M17 14l2 3M21 19l-2 3"/></svg></button>
 <button class="plain tk run act position-relative" aria-label="Teams"><svg width="28" height="25" viewBox="0 0 28 25"><use href="#teams" width="25" height="22"/><circle cx="20" cy="17" r="7.500" fill="#13a10e" stroke="none"/><path stroke="#fff" stroke-width="1.600" d="M17 17l2.300 2.300L23.500 15"/></svg></button>
 <button class="plain ms-auto" style="gap:7px;margin-right:20px"><svg width="26" height="24" viewBox="0 0 26 24"><path fill="#f5a524" stroke="none" d="M4 12h20a9.500 9.500 0 0 1-19 3z"/><path stroke="#ffd27a" stroke-width="1.800" d="M4 5h10M6 9h10M1 13h16M3 17h12"/><circle cx="18.500" cy="6" r="6" fill="#c62828" stroke="none"/><text x="18.500" y="9.500" text-anchor="middle" font-size="9" fill="#fff" stroke="none">1</text></svg>27°C</button>
 <button class="plain tr24" aria-label="Hidden icons"><svg width="12" height="8"><path stroke-width="1.300" d="M1 7l5-5.500L11 7"/></svg></button>
 <button class="plain tr24" aria-label="Chrome"><svg width="16" height="16"><use href="#chrome"/></svg></button>
 <button class="plain tr24" aria-label="Zoom"><svg width="16" height="16"><use href="#zoomi"/></svg></button>
 <button class="plain tr24" aria-label="Outlook"><svg width="16" height="16"><use href="#olk"/></svg></button>
 <button class="plain tr24" aria-label="Teams"><svg width="17" height="16" viewBox="0 0 17 16"><use href="#teams" width="17" height="15"/><circle cx="12" cy="12" r="3.500" fill="#8bc34a" stroke="#fff" stroke-width=".6"/></svg></button>
 <button class="plain tr24" aria-label="Security"><svg width="16" height="16" viewBox="0 0 16 16"><path fill="#fff" stroke="none" d="M7 0l6 2v5c0 4-2.500 6-6 8-3.500-2-6-4-6-8V2z"/><path stroke="#1c1c1c" stroke-width="1.200" d="M7 1v14M1 7h12"/><path fill="#ffb900" stroke="none" d="M11 7l5 9H6z"/><path stroke="#222" d="M11 10v3M11 14v1"/></svg></button>
 <button class="plain tr24" aria-label="Satellite"><svg width="16" height="16" viewBox="0 0 16 16"><ellipse cx="9" cy="7" rx="7" ry="3.500" transform="rotate(50 9 7)" stroke="#bbb"/><path stroke="#ddd" stroke-width="1.500" d="M3 2l5 6M2 12l6 1M4 14l3-5"/><circle cx="5" cy="11" r="2.500" fill="#ddd" stroke="none"/></svg></button>
 <button class="plain tr24" aria-label="VNC"><svg width="16" height="16" viewBox="0 0 16 16"><path fill="#dcebfb" stroke="none" d="M0 0h16v16H0z"/><path stroke="#3a78c9" stroke-width="1.300" d="M1.500 4L5 12l3-8M10 8V3h4v10h-4V8h4"/></svg></button>
 <button class="plain tr24" aria-label="Remote"><svg width="16" height="16" viewBox="0 0 16 16"><path fill="#2c93c7" stroke="none" d="M0 0h16v16H0z"/><path stroke="#bfe6f7" d="M2.500 3.500h6v5h-6zM2 11.500h8M4 13.500h9M10.500 2v8M13.500 2v7M4 6h3"/></svg></button>
 <button class="plain tr24" aria-label="Network"><svg width="17" height="15" viewBox="0 0 17 15"><path d="M4.500 3.500h12v8H4.500zM10.500 11.500v3M7 14h7M.5.500h4v4h-4zM2.500 4.500v7h2"/></svg></button>
 <button class="plain tr24" aria-label="Muted"><svg width="15" height="13" viewBox="0 0 15 13"><path d="M.5 4.500H3L7 1v11L3 8.500H.5zM10 4.500l4 4M14 4.500l-4 4"/></svg></button>
 <div class="clock">2:03 AM<br>7/19/2025</div>
 <button class="plain" style="width:38px;margin-right:10px" aria-label="Notifications"><svg width="26" height="26" viewBox="0 0 26 26"><path fill="#fff" stroke="none" d="M1 3h16v13H9l-4 3v-3H1z"/><path stroke="#1c1c1c" d="M4 6.500h10M4 9.500h10M4 12.500h6"/><circle cx="17" cy="17" r="7.500" fill="#3a3a3a" stroke="#aaa"/><text x="17" y="21" text-anchor="middle" font-size="11" font-weight="600" fill="#fff" stroke="none">11</text></svg></button>
 <div class="border-start border-secondary h-100" style="width:4px"></div>
</div>

<script src="https://cdn.jsdelivr.net/npm/bootstrap@5.3.0/dist/js/bootstrap.bundle.min.js"></script>
<script>
const T='vCloud Tech',C='vCloud Choice',P='Printer, Storage, Power',A='Accessories, Network',S='System/Display';
const mon='Mon, Jul 21, 2025 PDT',fri='Fri, Jul 18, 2025 PDT',thu='Thu, Jul 24, 2025 PDT to Fri, Jul 25, 20',wed='Wed, Jul 23, 2025 PDT to Thu, Jul 24,';
const tue22='Tue, Jul 22, 20',wed23='Wed, Jul 23, 2',mon21='Mon, Jul 21, 2',fri25='Fri, Jul 25, 20',thu24='Thu, Jul 24, 2';
const orders=[
[C,P,'114-1905771-6094643',thu,fri25],[T,A,'112-4709234-2409030',mon,tue22],[T,S,'112-7431541-8728260',mon,tue22],
[T,A,'113-2624518-2321054',mon,wed23],[T,A,'112-9625578-8193806',mon,wed23],[T,A,'111-0789693-0561808',fri,mon21],
[C,P,'112-8383637-8843452',thu,fri25],[T,A,'111-5060694-1330649',mon,wed23],[T,A,'111-6745063-1476204',mon,wed23],
[C,S,'113-0154938-4062671',fri,tue22],[T,P,'112-7257290-6626642',mon,tue22,61],[T,P,'111-2832045-1374639',mon,tue22,61],
[T,P,'112-5892932-8805012',mon,tue22,61],[C,A,'112-0766321-8553821',fri,tue22],[C,P,'112-5859492-9625848',wed,thu24],
[C,P,'111-6899122-0381054',thu,fri25],[C,P,'114-6015402-1615452',thu,fri25],[C,P,'111-5991376-5536247',thu,fri25],
[C,A,'111-6138929-1461008',fri,tue22],[C,P,'114-8921395-8406655',thu,fri25],[C,P,'113-2066369-0236200',thu,fri25],
[C,P,'113-4070899-0022645',thu,fri25]];
document.getElementById('rows').insertAdjacentHTML('beforeend',orders.map((o,i)=>{
 const n=1601+i,hit=n===1611||n===1612;
 const cells=['Amazon Order 0718-'+(45+i),...o.slice(0,5)];
 return `<tr class="${i?'':'first '}${hit?'hitrow':''}" style="height:${o[5]||(i?20:18)}px"><th>${n}</th>`+
  cells.map((c,k)=>`<td><div>${c}</div>${n===1612&&k===0?'<span class="knob"></span>':''}</td>`).join('')+'</tr>';
}).join(''));
</script>
</body>
</html>
